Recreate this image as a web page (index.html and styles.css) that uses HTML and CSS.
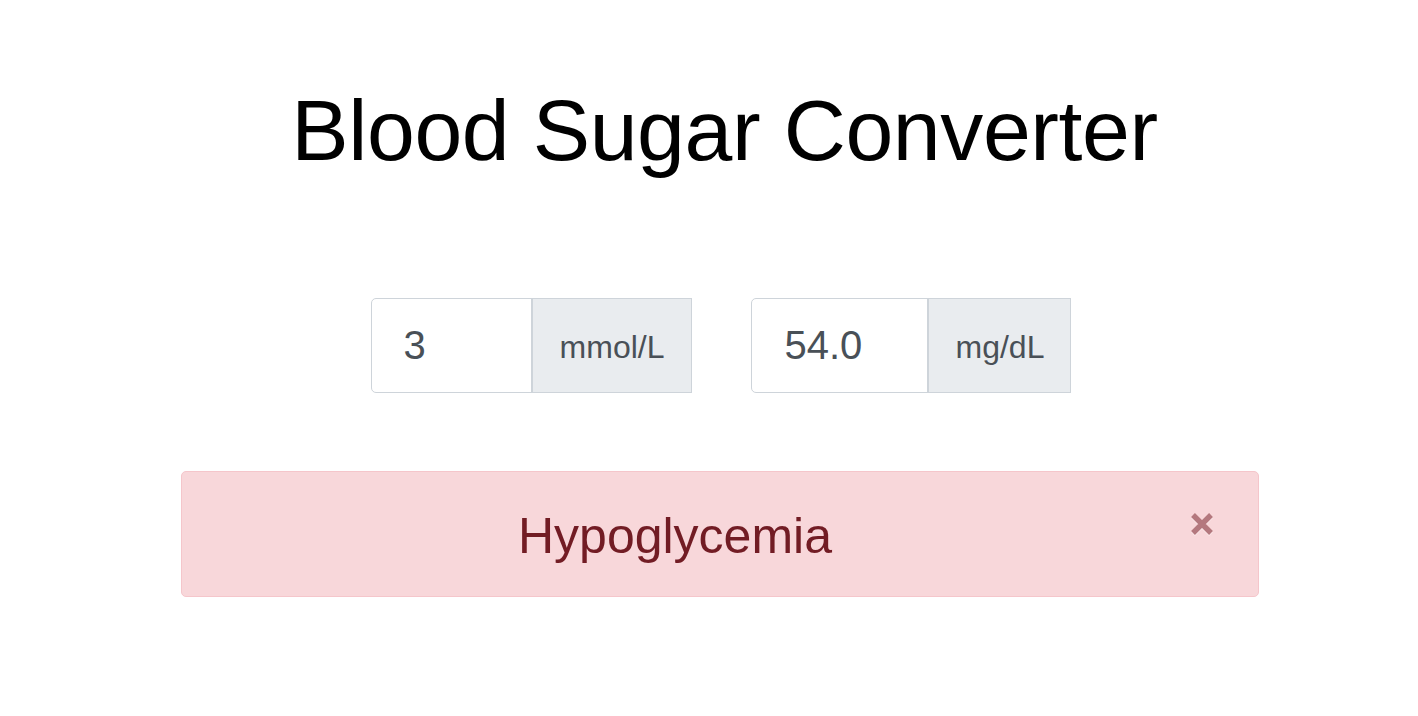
FILE: index.html
```html
<!DOCTYPE html>
<html lang="en">
<head>
<meta charset="utf-8">
<title>Blood Sugar Converter</title>
<link rel="stylesheet" href="styles.css">
</head>
<body>
<main class="page">
  <h1 class="title">Blood Sugar Converter</h1>
  <div class="converter">
    <div class="input-group">
      <input class="value-input value-input--mmol" type="text" value="3">
      <span class="unit unit--mmol">mmol/L</span>
    </div>
    <div class="input-group">
      <input class="value-input value-input--mg" type="text" value="54.0">
      <span class="unit unit--mg">mg/dL</span>
    </div>
  </div>
  <div class="alert" role="alert">
    <span class="alert-text">Hypoglycemia</span>
    <button class="close" type="button" aria-label="Close">
      <svg class="close-icon" width="24" height="24" viewBox="0 0 24 24" aria-hidden="true">
        <path d="M3 3 L21 21 M21 3 L3 21" stroke="currentColor" stroke-width="5.4" fill="none"/>
      </svg>
    </button>
  </div>
</main>
</body>
</html>
```

FILE: styles.css
```css
* {
  box-sizing: border-box;
}

html, body {
  margin: 0;
  padding: 0;
  background: #fff;
}

body {
  font-family: "Liberation Sans", Arial, Helvetica, sans-serif;
  color: #212529;
}

.page {
  width: 1078px;
  margin-left: 181px;
  padding-top: 79px;
}

.title {
  margin: 0;
  padding-left: 9px;
  text-align: center;
  font-size: 86px;
  font-weight: 400;
  line-height: 1.2;
  letter-spacing: -0.4px;
  color: #000;
}

.converter {
  margin-top: 116px;
  padding-left: 2px;
  display: flex;
  justify-content: center;
  gap: 59px;
}

.input-group {
  display: flex;
  height: 95px;
}

.value-input {
  height: 95px;
  margin: 0;
  padding: 0 12px 0 32px;
  border: 1px solid #ced4da;
  border-radius: 5px 0 0 5px;
  background: #fff;
  font-family: "Liberation Sans", Arial, Helvetica, sans-serif;
  font-size: 40px;
  color: #495057;
  outline: none;
}

.value-input--mmol {
  width: 161px;
}

.value-input--mg {
  width: 177px;
}

.unit {
  display: flex;
  align-items: center;
  height: 95px;
  padding: 3px 27px 0;
  border: 1px solid #ced4da;
  border-left-width: 2px;
  margin-left: -1px;
  background: #e9ecef;
  font-size: 32px;
  color: #495057;
  white-space: nowrap;
}

.unit--mg {
  padding-left: 26px;
  padding-right: 26px;
}

.alert {
  position: relative;
  margin-top: 78px;
  height: 126px;
  padding: 28px 110px 24px 20px;
  border: 1px solid #f5c6cb;
  border-radius: 5px;
  background: #f8d7da;
  color: #721c24;
  text-align: center;
  font-size: 50px;
  line-height: 72px;
}

.close {
  position: absolute;
  top: 40px;
  right: 44px;
  width: 24px;
  height: 24px;
  padding: 0;
  margin: 0;
  border: 0;
  background: transparent;
  color: #721c24;
  opacity: 0.5;
  cursor: pointer;
  display: block;
}

.close-icon {
  display: block;
  filter: drop-shadow(0 1px 0 #fff);
}
```
